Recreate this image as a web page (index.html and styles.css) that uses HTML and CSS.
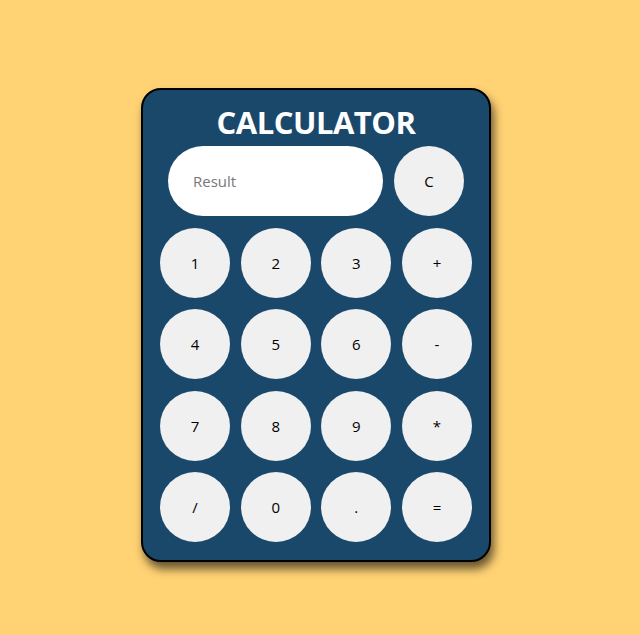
FILE: index.html
```html
<!DOCTYPE html>
<html>
<head>
<meta charset="utf-8">
<link rel="stylesheet" href="styles.css">
</head>
<body>
<div class="calc">
  <h1 class="title">CALCULATOR</h1>
  <div class="top">
    <input class="result" type="text" placeholder="Result">
    <button class="btn">C</button>
  </div>
  <div class="keys">
    <button class="btn">1</button>
    <button class="btn">2</button>
    <button class="btn">3</button>
    <button class="btn">+</button>
    <button class="btn">4</button>
    <button class="btn">5</button>
    <button class="btn">6</button>
    <button class="btn">-</button>
    <button class="btn">7</button>
    <button class="btn">8</button>
    <button class="btn">9</button>
    <button class="btn">*</button>
    <button class="btn">/</button>
    <button class="btn">0</button>
    <button class="btn">.</button>
    <button class="btn">=</button>
  </div>
</div>
</body>
</html>
```
FILE: styles.css
```css
html, body {
  margin: 0;
  padding: 0;
}
body {
  background: #ffd274;
  font-family: "Open Sans", "Noto Sans", sans-serif;
  height: 635px;
  overflow: hidden;
}
.calc {
  box-sizing: border-box;
  width: 350px;
  height: 474px;
  margin: 88px 0 0 141px;
  background: #1a486b;
  border: 2px solid #000;
  border-radius: 20px;
  box-shadow: 3px 7px 10px rgba(0, 0, 0, 0.6);
  padding: 11px 0 0 0;
  display: flex;
  flex-direction: column;
  align-items: center;
}
.title {
  margin: 0;
  color: #fff;
  font-size: 31px;
  font-weight: 700;
  line-height: 43px;
  text-align: center;
  letter-spacing: -0.5px;
}
.top {
  margin-top: 2px;
  display: flex;
  gap: 11px;
}
.result {
  box-sizing: border-box;
  width: 215px;
  height: 70px;
  border: none;
  border-radius: 35px;
  background: #fff;
  padding: 0 0 0 25px;
  font-family: inherit;
  font-size: 15px;
  outline: none;
}
.result::placeholder {
  color: #777;
}
.btn {
  width: 70px;
  height: 70px;
  border: none;
  border-radius: 50%;
  background: #f0f0f0;
  color: #000;
  font-family: inherit;
  font-size: 15px;
  padding: 0;
}
.keys {
  margin-top: 12px;
  display: grid;
  grid-template-columns: repeat(4, 70px);
  column-gap: 10.67px;
  row-gap: 11.3px;
}
```
